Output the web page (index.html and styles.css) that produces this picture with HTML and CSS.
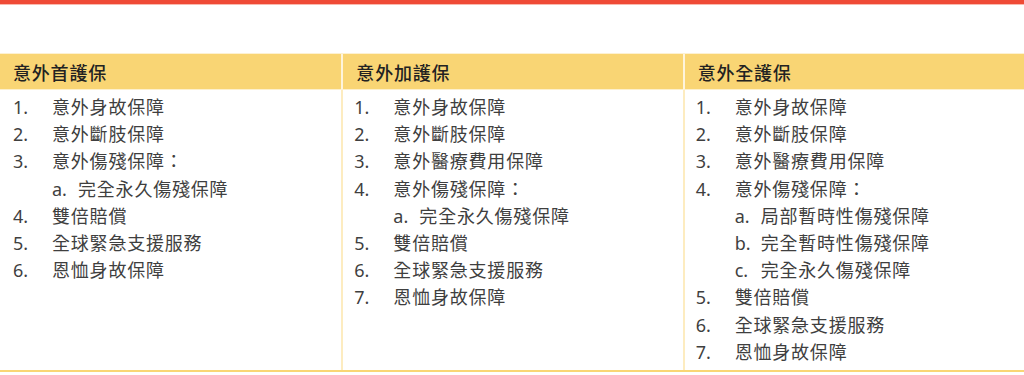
FILE: index.html
```html
<!DOCTYPE html>
<html lang="zh-Hant">
<head>
<meta charset="utf-8">
<link rel="stylesheet" href="styles.css">
</head>
<body>
<div class="topbar"></div>
<div class="plans">
  <div class="col">
    <div class="head">意外首護保</div>
    <ol class="list">
      <li><span class="num">1.</span><span>意外身故保障</span></li>
      <li><span class="num">2.</span><span>意外斷肢保障</span></li>
      <li><span class="num">3.</span><span>意外傷殘保障：</span></li>
      <li class="sub"><span class="snum">a.</span><span>完全永久傷殘保障</span></li>
      <li><span class="num">4.</span><span>雙倍賠償</span></li>
      <li><span class="num">5.</span><span>全球緊急支援服務</span></li>
      <li><span class="num">6.</span><span>恩恤身故保障</span></li>
    </ol>
  </div>
  <div class="col">
    <div class="head">意外加護保</div>
    <ol class="list">
      <li><span class="num">1.</span><span>意外身故保障</span></li>
      <li><span class="num">2.</span><span>意外斷肢保障</span></li>
      <li><span class="num">3.</span><span>意外醫療費用保障</span></li>
      <li><span class="num">4.</span><span>意外傷殘保障：</span></li>
      <li class="sub"><span class="snum">a.</span><span>完全永久傷殘保障</span></li>
      <li><span class="num">5.</span><span>雙倍賠償</span></li>
      <li><span class="num">6.</span><span>全球緊急支援服務</span></li>
      <li><span class="num">7.</span><span>恩恤身故保障</span></li>
    </ol>
  </div>
  <div class="col">
    <div class="head">意外全護保</div>
    <ol class="list">
      <li><span class="num">1.</span><span>意外身故保障</span></li>
      <li><span class="num">2.</span><span>意外斷肢保障</span></li>
      <li><span class="num">3.</span><span>意外醫療費用保障</span></li>
      <li><span class="num">4.</span><span>意外傷殘保障：</span></li>
      <li class="sub"><span class="snum">a.</span><span>局部暫時性傷殘保障</span></li>
      <li class="sub"><span class="snum">b.</span><span>完全暫時性傷殘保障</span></li>
      <li class="sub"><span class="snum">c.</span><span>完全永久傷殘保障</span></li>
      <li><span class="num">5.</span><span>雙倍賠償</span></li>
      <li><span class="num">6.</span><span>全球緊急支援服務</span></li>
      <li><span class="num">7.</span><span>恩恤身故保障</span></li>
    </ol>
  </div>
</div>
</body>
</html>
```
FILE: styles.css
```css
html, body {
  margin: 0;
  padding: 0;
  background: #ffffff;
}
body {
  font-family: "Noto Sans", "Noto Sans CJK TC", sans-serif;
  width: 1024px;
  height: 375px;
  overflow: hidden;
}
.topbar {
  height: 4px;
  background: #ef4a36;
  border-bottom: 1px solid #f9b9ae;
}
.plans {
  margin-top: 48px;
  display: grid;
  grid-template-columns: repeat(3, 1fr);
  border-top: 1px solid #fdf1d2;
  border-bottom: 2px solid #f9d675;
}
.col {
  display: flex;
  flex-direction: column;
}
.col + .col {
  border-left: 2px solid #fdecc0;
}
.col + .col .head {
  margin-left: -2px;
  border-left: 2px solid #fef4dc;
}
.head {
  height: 35px;
  background: #f9d574;
  color: #222222;
  font-size: 18px;
  font-weight: 500;
  letter-spacing: 0.8px;
  line-height: 38px;
  padding-left: 13px;
  border-bottom: 1px solid #fdf0cc;
}
.list {
  list-style: none;
  margin: 0;
  padding: 4px 0 4px 13px;
  font-size: 18px;
  line-height: 27.2px;
  color: #3f3f3f;
  letter-spacing: 0.8px;
}
.col + .col .list {
  padding-left: 11px;
}
.list li {
  display: flex;
}
.num {
  width: 39px;
  flex: none;
  letter-spacing: 0;
}
.sub {
  padding-left: 39px;
}
.snum {
  width: 26px;
  flex: none;
  letter-spacing: 0;
}
```
